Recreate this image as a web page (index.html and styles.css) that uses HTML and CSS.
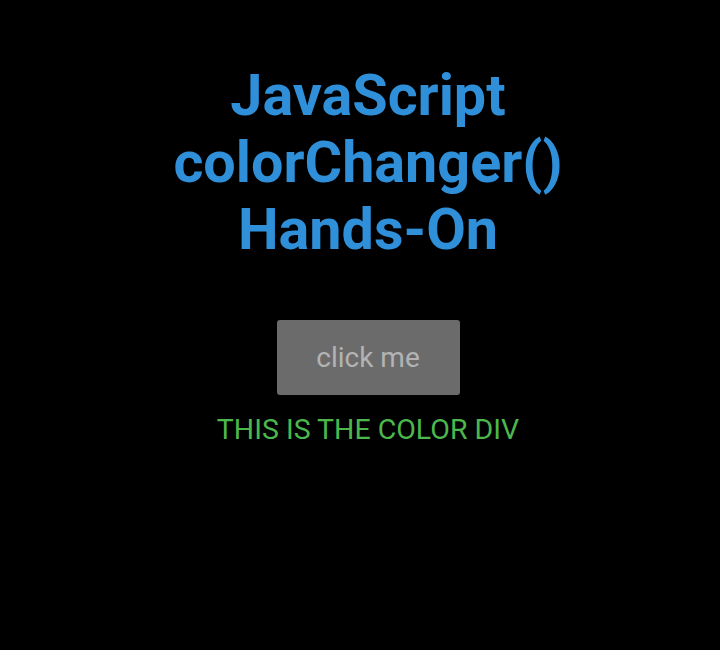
FILE: index.html
```html
<!DOCTYPE html>
<html>
<head>
<meta charset="utf-8">
<link rel="stylesheet" href="styles.css">
</head>
<body>
<main class="page">
  <h1 class="title">JavaScript<br>colorChanger()<br>Hands-On</h1>
  <button class="btn">click me</button>
  <div class="color-div">THIS IS THE COLOR DIV</div>
</main>
</body>
</html>
```
FILE: styles.css
```css
html, body {
  margin: 0;
  padding: 0;
  background: #000;
}
.page {
  display: flex;
  flex-direction: column;
  align-items: center;
  padding: 62px 0 0 16px;
  font-family: Roboto, "Noto Sans", sans-serif;
}
.title {
  margin: 0;
  color: #2f8fd8;
  font-size: 57.5px;
  font-weight: 700;
  line-height: 67px;
  text-align: center;
}
.btn {
  margin-top: 57px;
  width: 183px;
  height: 75px;
  background: #6b6b6b;
  color: #b3b3b3;
  border: none;
  border-radius: 3px;
  font-family: Roboto, sans-serif;
  font-size: 28px;
}
.color-div {
  margin-top: 18px;
  color: #4cb84c;
  font-size: 28.5px;
  line-height: 34px;
}
```
